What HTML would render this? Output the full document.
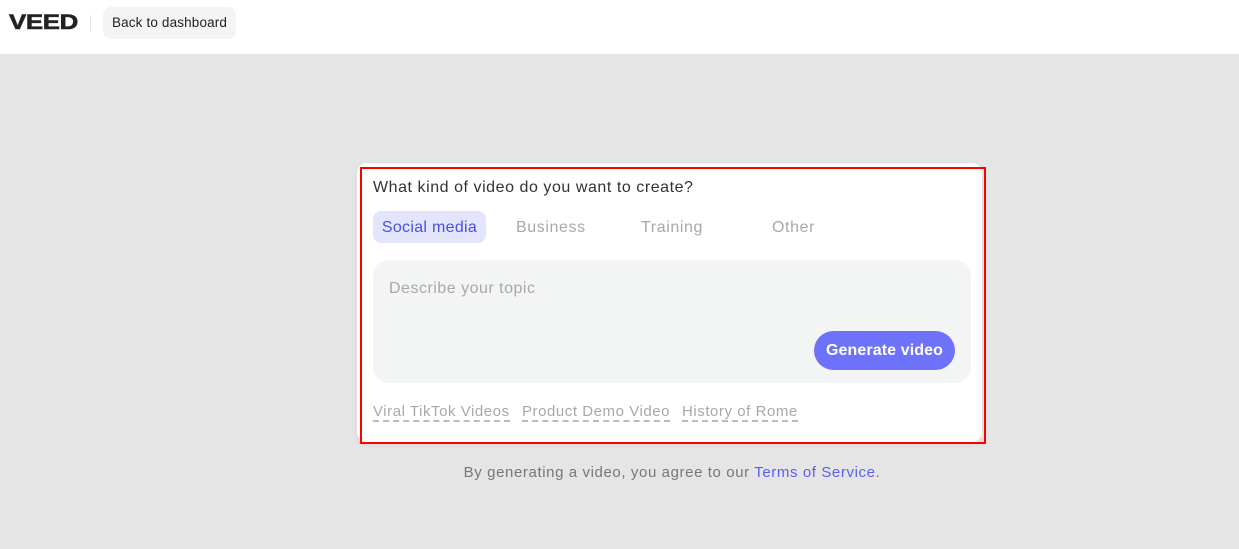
<!DOCTYPE html>
<html><head><meta charset="utf-8">
<style>
*{margin:0;padding:0;box-sizing:border-box}
body{width:1239px;height:549px;background:#e5e5e5;font-family:"Liberation Sans",sans-serif;position:relative;overflow:hidden}
.top{position:absolute;left:0;top:0;width:1239px;height:54px;background:#fff}
.logo{position:absolute;left:9px;top:11px;font-weight:900;font-size:21px;letter-spacing:-0.3px;color:#222;transform:scaleX(1.23);transform-origin:left;-webkit-text-stroke:0.6px #222}
.sep{position:absolute;left:90px;top:15px;width:1px;height:16px;background:#e5e5e5}
.back{position:absolute;left:103px;top:7px;width:133px;height:32px;border-radius:8px;background:#f4f4f4;font-size:13.5px;letter-spacing:0.15px;color:#222;line-height:32px;text-align:center}
.card{position:absolute;left:357px;top:163px;width:625px;height:279px;background:#fff;border-radius:10px;box-shadow:0 2px 8px rgba(0,0,0,.06)}
.red{position:absolute;left:360px;top:167px;width:626px;height:277px;border:2px solid #f00}
.q{position:absolute;left:373px;top:179px;font-size:16px;letter-spacing:0.55px;color:#333}
.tab{position:absolute;top:212px;height:32px;line-height:32px;font-size:16px;letter-spacing:0.6px;color:#a8a8a8}
.tab.on{left:373px;top:211px;width:113px;background:#e3e5fd;border-radius:8px;color:#4b4fe0;text-align:center;letter-spacing:0.3px;line-height:33px}
.box{position:absolute;left:373px;top:260px;width:598px;height:123px;background:#f3f4f4;border-radius:16px}
.ph{position:absolute;left:389px;top:280px;font-size:16px;letter-spacing:0.5px;color:#a8a8a8}
.gen{position:absolute;left:814px;top:331px;width:141px;height:39px;border-radius:20px;background:#6e72f8;color:#fff;font-weight:bold;font-size:16px;letter-spacing:0.1px;line-height:40px;text-align:center}
.sug{position:absolute;top:404px;font-size:15px;letter-spacing:0.55px;color:#a8a8a8;border-bottom:2px dashed #bbb;line-height:16px}
.foot{position:absolute;top:464px;text-align:center;font-size:15px;letter-spacing:0.6px;color:#777;left:0;width:1344px}
.foot span{color:#5b5ff0}
</style></head><body>
<div class="top"></div>
<div class="logo">VEED</div>
<div class="sep"></div>
<div class="back">Back to dashboard</div>
<div class="card"></div>
<div class="red"></div>
<div class="q">What kind of video do you want to create?</div>
<div class="tab on">Social media</div>
<div class="tab" style="left:516px">Business</div>
<div class="tab" style="left:641px">Training</div>
<div class="tab" style="left:772px">Other</div>
<div class="box"></div>
<div class="ph">Describe your topic</div>
<div class="gen">Generate video</div>
<div class="sug" style="left:373px">Viral TikTok Videos</div>
<div class="sug" style="left:522px">Product Demo Video</div>
<div class="sug" style="left:682px">History of Rome</div>
<div class="foot">By generating a video, you agree to our <span>Terms of Service</span>.</div>
</body></html>
